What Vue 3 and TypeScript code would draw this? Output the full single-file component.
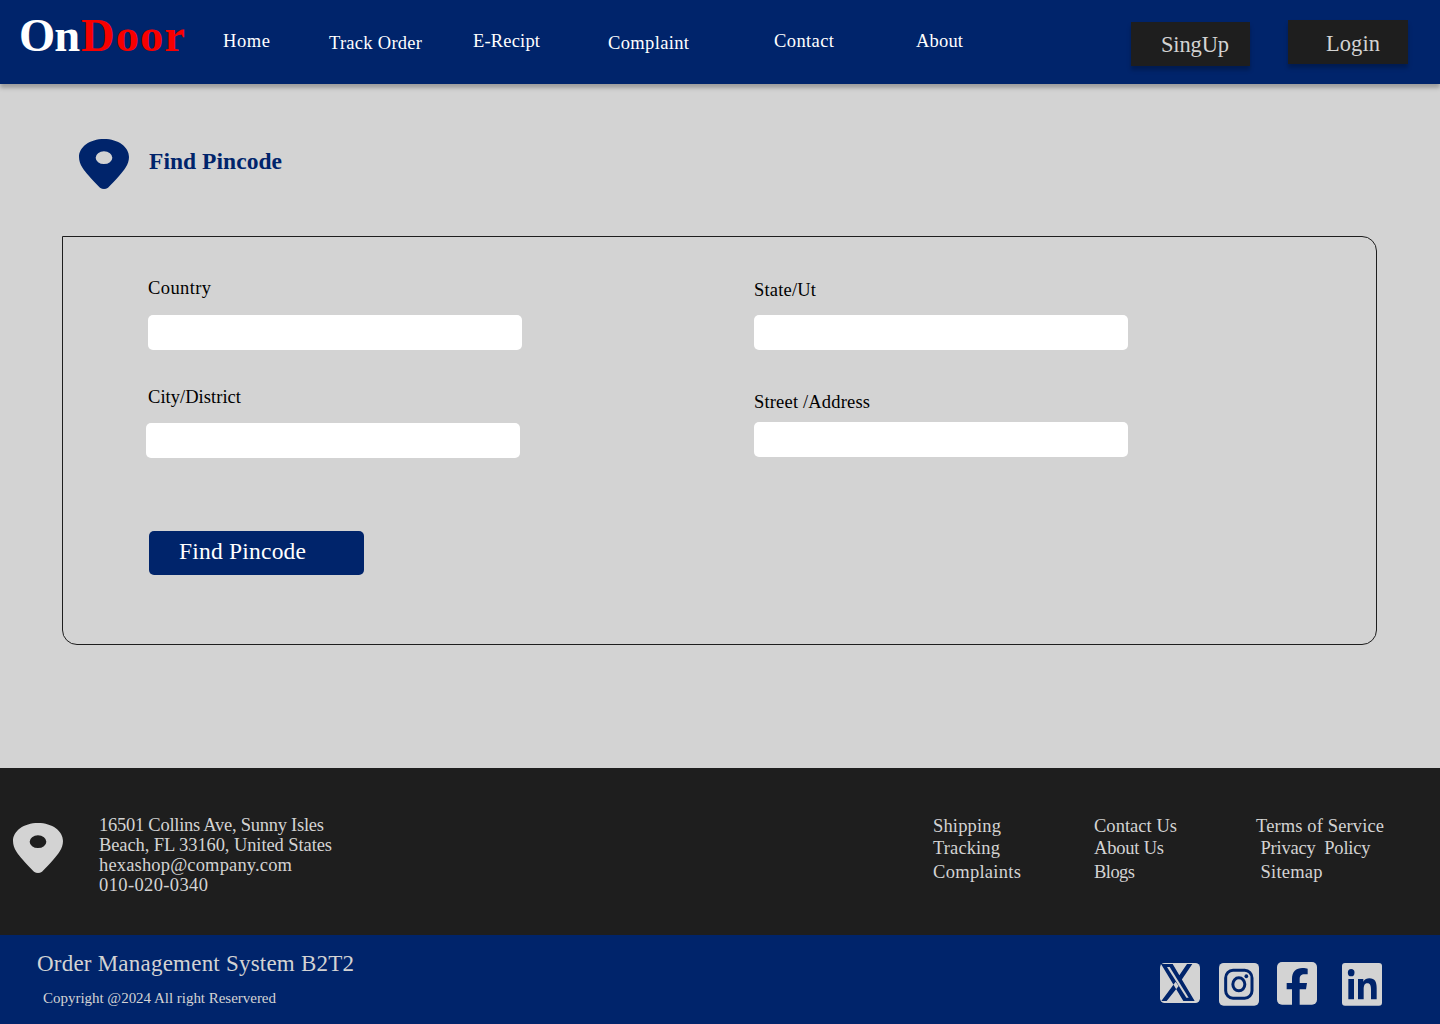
<script setup lang="ts">
interface Label {
  text: string
  width: number
}

const navItems: Label[] = [
  { text: 'Home', width: 47 },
  { text: 'Track Order', width: 93 },
  { text: 'E-Recipt', width: 67 },
  { text: 'Complaint', width: 81 },
  { text: 'Contact', width: 60 },
  { text: 'About', width: 47 },
]

const fields: Label[] = [
  { text: 'Country', width: 63 },
  { text: 'State/Ut', width: 62 },
  { text: 'City/District', width: 93 },
  { text: 'Street /Address', width: 116 },
]

const address: Label[] = [
  { text: '16501 Collins Ave, Sunny Isles', width: 225 },
  { text: 'Beach, FL 33160, United States', width: 233 },
  { text: 'hexashop@company.com', width: 193 },
  { text: '010-020-0340', width: 109 },
]

const linkColumns: Label[][] = [
  [
    { text: 'Shipping', width: 68 },
    { text: 'Tracking', width: 67 },
    { text: 'Complaints', width: 88 },
  ],
  [
    { text: 'Contact Us', width: 83 },
    { text: 'About Us', width: 70 },
    { text: 'Blogs', width: 41 },
  ],
  [
    { text: 'Terms of Service', width: 128 },
    { text: 'Privacy  Policy', width: 110 },
    { text: 'Sitemap', width: 62 },
  ],
]

// Tracks a single line of text so that it spans the given width.
const vFit = {
  mounted(el: HTMLElement, binding: { value: number }) {
    const count = (el.textContent ?? '').length
    const range = document.createRange()
    range.selectNodeContents(el)
    const natural = range.getBoundingClientRect().width
    el.style.letterSpacing = `${(binding.value - natural) / Math.max(count - 1, 1)}px`
    el.style.width = `${binding.value}px`
  },
}
</script>

<template>
  <div class="page">
    <header class="header">
      <div class="logo">
        <span v-fit="61" class="line">On</span>
        <span v-fit="104" class="line door">Door</span>
      </div>
      <nav class="nav">
        <a v-for="n in navItems" :key="n.text" v-fit="n.width" class="line">{{ n.text }}</a>
      </nav>
      <div class="auth">
        <button class="dark signup"><span v-fit="68" class="line">SingUp</span></button>
        <button class="dark login"><span v-fit="54" class="line">Login</span></button>
      </div>
    </header>

    <main class="main">
      <div class="title">
        <svg class="pin" viewBox="0 0 150 150">
          <path fill-rule="evenodd" d="M75 0C32 0 0 24 0 54C0 77 16 95 28 109C40 123 53 137 63 146Q75 154 87 146C97 137 110 123 122 109C134 95 150 77 150 54C150 24 118 0 75 0ZM75 37A25 19 0 1 1 75 75A25 19 0 1 1 75 37Z" />
        </svg>
        <h1 v-fit="133" class="line">Find Pincode</h1>
      </div>
      <form class="panel" @submit.prevent>
        <div class="grid">
          <div v-for="(f, i) in fields" :key="f.text" class="field" :class="'f' + i">
            <label v-fit="f.width" class="line" :for="'field' + i">{{ f.text }}</label>
            <input :id="'field' + i" type="text" />
          </div>
        </div>
        <button class="find"><span v-fit="127" class="line">Find Pincode</span></button>
      </form>
    </main>

    <footer>
      <div class="info">
        <svg class="pin" viewBox="0 0 150 150">
          <path fill-rule="evenodd" d="M75 0C32 0 0 24 0 54C0 77 16 95 28 109C40 123 53 137 63 146Q75 154 87 146C97 137 110 123 122 109C134 95 150 77 150 54C150 24 118 0 75 0ZM75 37A25 19 0 1 1 75 75A25 19 0 1 1 75 37Z" />
        </svg>
        <div class="address">
          <div v-for="a in address" :key="a.text" v-fit="a.width" class="line">{{ a.text }}</div>
        </div>
        <div class="links">
          <div v-for="(col, i) in linkColumns" :key="i" class="col">
            <a v-for="l in col" :key="l.text" v-fit="l.width" class="line">{{ l.text }}</a>
          </div>
        </div>
      </div>
      <div class="bottom">
        <div class="legal">
          <div v-fit="317" class="line system">Order Management System B2T2</div>
          <div v-fit="233" class="line copy">Copyright @2024 All right Reservered</div>
        </div>
        <div class="social">
          <svg class="x" width="40" height="40" viewBox="0 0 120 120">
            <rect class="tile" width="120" height="120" rx="14" />
            <path class="ink" d="M3 3H38L104 114H70ZM81 3H97L64 52L56 40ZM4 114H20L56 69L47 56Z" />
            <path class="tile" d="M21 12H29L86 104H79Z" />
          </svg>
          <svg class="insta" width="40" height="43" viewBox="0 0 120 129">
            <rect class="tile" width="120" height="128" rx="14" />
            <rect class="stroke" x="20" y="22" width="79" height="84" rx="22" ry="23" />
            <ellipse class="stroke" cx="59.500" cy="64" rx="18" ry="19.500" />
            <ellipse class="ink" cx="82" cy="40" rx="5.500" ry="6" />
          </svg>
          <svg class="fb" width="40" height="43" viewBox="0 0 120 129">
            <rect class="tile" width="120" height="128" rx="15" />
            <path class="ink" d="M45 129V82H29V63H45V52C45 28 57 18 76 18C83 18 89 19 92 20V37H83C72 37 68 42 68 52V63H90L87 82H68V129Z" />
          </svg>
          <svg class="linkedin" width="40" height="43" viewBox="0 0 120 129">
            <rect class="tile" width="120" height="128" rx="9" />
            <ellipse class="ink" cx="27.500" cy="29" rx="10" ry="11" />
            <path class="ink" d="M19 48H36V109H19ZM48 48H64V56C68 49 75 46 82 46C99 46 104 57 104 75V109H87V79C87 69 85 61 76 61C67 61 65 69 65 79V109H48Z" />
          </svg>
        </div>
      </div>
    </footer>
  </div>
</template>

<style>
body {
  margin: 0;
}
</style>

<style scoped>
.page {
  width: 1440px;
  height: 1024px;
  overflow: hidden;
  display: flex;
  flex-direction: column;
  background: #d3d3d3;
  color: #000;
  font-family: "Liberation Serif", "Times New Roman", serif;
  font-size: 18.5px;
  line-height: 20px;
}
.line {
  display: block;
  white-space: pre;
}
.header {
  height: 84px;
  flex: none;
  display: flex;
  align-items: flex-start;
  background: #00246b;
  color: #fff;
  box-shadow: 0 4px 4px rgba(0, 0, 0, 0.25);
}
.logo {
  display: flex;
  width: 204px;
  padding: 11px 0 0 19px;
  font-size: 46.5px;
  font-weight: 700;
  line-height: 50px;
}
.door {
  color: #f80000;
  margin-left: 1px;
}
.nav {
  display: flex;
  padding-top: 31px;
  width: 908px;
}
.nav a {
  flex: none;
}
.nav a:nth-child(2) {
  margin: 2px 0 0 59px;
}
.nav a:nth-child(3) {
  margin-left: 51px;
}
.nav a:nth-child(4) {
  margin: 2px 0 0 68px;
}
.nav a:nth-child(5) {
  margin-left: 85px;
}
.nav a:nth-child(6) {
  margin-left: 82px;
}
button {
  border: 0;
  margin: 0;
  display: flex;
  align-items: flex-start;
  text-align: left;
  font: inherit;
}
.auth {
  display: flex;
  padding-top: 20px;
}
.dark {
  height: 44px;
  background: #1e1e1e;
  color: #d3d3d3;
  box-shadow: 0 4px 4px rgba(0, 0, 0, 0.25);
  font-size: 22.5px;
  line-height: 26px;
}
.signup {
  width: 119px;
  padding: 10px 0 0 30px;
  margin-top: 2px;
}
.login {
  width: 120px;
  padding: 11px 0 0 38px;
  margin-left: 38px;
}
.main {
  height: 684px;
  flex: none;
}
.title {
  display: flex;
  height: 97px;
  padding: 55px 0 0 79px;
}
.pin {
  width: 50px;
  height: 50px;
  flex: none;
  fill: #00246b;
}
h1 {
  margin: 9px 0 0 20px;
  color: #00246b;
  font-size: 23.5px;
  line-height: 26px;
}
.panel {
  box-sizing: border-box;
  width: 1315px;
  height: 409px;
  margin-left: 62px;
  padding: 41px 0 0 85px;
  border: 1px solid #1e1e1e;
  border-radius: 0 15px 15px 15px;
}
.grid {
  display: grid;
  grid-template-columns: 606px 374px;
  grid-template-rows: 109px 144px;
}
.field input {
  display: block;
  box-sizing: border-box;
  width: 374px;
  height: 35px;
  margin: 17px 0 0;
  border: 0;
  border-radius: 5px;
  background: #fff;
}
.f1 {
  padding-top: 2px;
}
.f1 input {
  margin-top: 15px;
}
.f2 input {
  margin: 16px 0 0 -2px;
}
.f3 {
  padding-top: 5px;
}
.f3 input {
  margin-top: 10px;
}
.find {
  width: 215px;
  height: 44px;
  margin-left: 1px;
  padding: 7px 0 0 30px;
  border-radius: 5px;
  background: #00246b;
  color: #fff;
  font-size: 23.5px;
  line-height: 26px;
}
footer {
  color: #d3d3d3;
}
.info {
  display: flex;
  height: 167px;
  background: #1e1e1e;
}
.info .pin {
  fill: #d3d3d3;
  margin: 54.5px 36px 0 13px;
}
.address {
  width: 834px;
  padding-top: 47px;
}
.links {
  display: flex;
  padding-top: 48px;
}
.col {
  width: 161px;
}
.col a:nth-child(2) {
  margin-top: 2px;
}
.col a:nth-child(3) {
  margin-top: 4px;
}
.col:nth-child(3) {
  margin-left: 1px;
}
.col:nth-child(3) a:nth-child(n + 2) {
  margin-left: 4.5px;
}
.bottom {
  display: flex;
  justify-content: space-between;
  height: 89px;
  background: #00246b;
}
.legal {
  padding: 16px 0 0 37px;
}
.system {
  font-size: 23px;
  line-height: 26px;
}
.copy {
  margin: 12px 0 0 6px;
  font-size: 15px;
  line-height: 18px;
}
.social {
  display: flex;
  align-items: flex-start;
  padding: 28px 58px 0 0;
}
.insta {
  margin-left: 19px;
}
.fb {
  margin: -1px 0 0 18px;
}
.linkedin {
  margin-left: 25px;
}
.tile {
  fill: #d3d3d3;
}
.ink {
  fill: #00246b;
}
.stroke {
  fill: none;
  stroke: #00246b;
  stroke-width: 9;
}
</style>
